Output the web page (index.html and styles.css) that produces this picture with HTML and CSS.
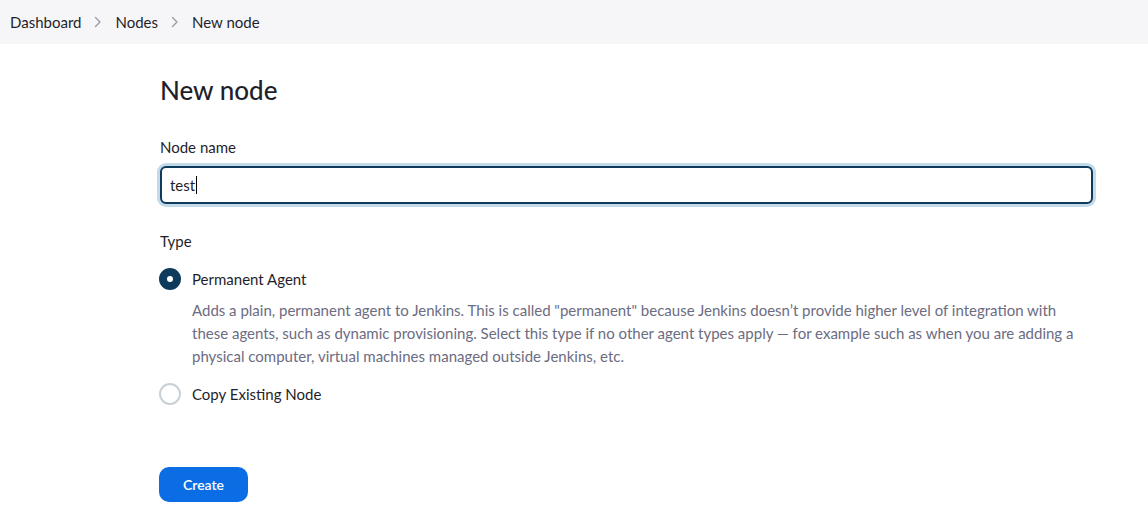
FILE: index.html
```html
<!DOCTYPE html>
<html>
<head>
<meta charset="utf-8">
<link rel="stylesheet" href="styles.css">
</head>
<body>
<nav class="breadcrumbs">
  <a class="crumb">Dashboard</a>
  <svg class="chev" width="8" height="12" viewBox="0 0 8 12"><path d="M1.5 1.5 L6 6 L1.5 10.5" fill="none" stroke="#9a9aa8" stroke-width="1.4" stroke-linecap="round" stroke-linejoin="round"/></svg>
  <a class="crumb">Nodes</a>
  <svg class="chev" width="8" height="12" viewBox="0 0 8 12"><path d="M1.5 1.5 L6 6 L1.5 10.5" fill="none" stroke="#9a9aa8" stroke-width="1.4" stroke-linecap="round" stroke-linejoin="round"/></svg>
  <span class="crumb">New node</span>
</nav>
<main class="content">
  <h1 class="title">New node</h1>
  <div class="field">
    <label class="label">Node name</label>
    <div class="input-ring"><div class="input">test<span class="caret"></span></div></div>
  </div>
  <div class="field type">
    <div class="label">Type</div>
    <div class="option">
      <span class="radio checked"></span>
      <span class="opt-label">Permanent Agent</span>
    </div>
    <p class="desc">Adds a plain, permanent agent to Jenkins. This is called "permanent" because Jenkins doesn’t provide higher level of integration with these agents, such as dynamic provisioning. Select this type if no other agent types apply — for example such as when you are adding a physical computer, virtual machines managed outside Jenkins, etc.</p>
    <div class="option second">
      <span class="radio"></span>
      <span class="opt-label">Copy Existing Node</span>
    </div>
  </div>
  <button class="btn">Create</button>
</main>
</body>
</html>
```
FILE: styles.css
```css
* { box-sizing: border-box; }
body {
  margin: 0;
  font-family: Lato, "Noto Sans", sans-serif;
  color: #1f1f2b;
  background: #fff;
}
.breadcrumbs {
  height: 44px;
  background: #f6f6f8;
  display: flex;
  align-items: center;
  padding: 0 10px;
  gap: 13px;
  font-size: 15px;
}
.crumb { color: #1f1f2b; }
.content {
  padding: 0 52px 0 160px;
  display: flex;
  flex-direction: column;
}
.title {
  font-size: 26px;
  font-weight: 500;
  margin: 31px 0 0;
  line-height: 30px;
}
.field { display: flex; flex-direction: column; }
.label {
  font-size: 15px;
  margin-top: 32px;
  line-height: 20px;
}
.input-ring {
  margin: 6px 0 0 -3px;
  padding: 3px;
  border-radius: 9px;
  background: #c3dae9;
}
.input {
  height: 38px;
  border: 2px solid #0e3a5c;
  border-radius: 6px;
  background: #fff;
  font-size: 15px;
  display: flex;
  align-items: center;
  padding-left: 8px;
}
.caret {
  display: inline-block;
  width: 1px;
  height: 18px;
  background: #000;
  margin-left: 1px;
}
.type .label { margin-top: 24px; }
.option {
  display: flex;
  align-items: center;
  gap: 11px;
  margin-top: 17px;
  margin-left: -1px;
  font-size: 15px;
}
.option.second { margin-top: 15px; }
.radio {
  width: 22px;
  height: 22px;
  border-radius: 50%;
  border: 2px solid #c9d1d7;
  display: flex;
  align-items: center;
  justify-content: center;
}
.radio.checked {
  background: #0e3a5c;
  border-color: #0e3a5c;
}
.radio.checked::after {
  content: "";
  width: 6px;
  height: 6px;
  border-radius: 50%;
  background: #fff;
}
.desc {
  margin: 9px 0 0 32px;
  font-size: 15px;
  line-height: 23px;
  color: #6c6c82;
  max-width: 900px;
}
.btn {
  align-self: flex-start;
  margin: 62px 0 0 -1px;
  width: 89px;
  height: 35px;
  border: none;
  border-radius: 10px;
  background: #0b6de3;
  color: #fff;
  font-family: inherit;
  font-weight: 600;
  font-size: 14px;
}
```
